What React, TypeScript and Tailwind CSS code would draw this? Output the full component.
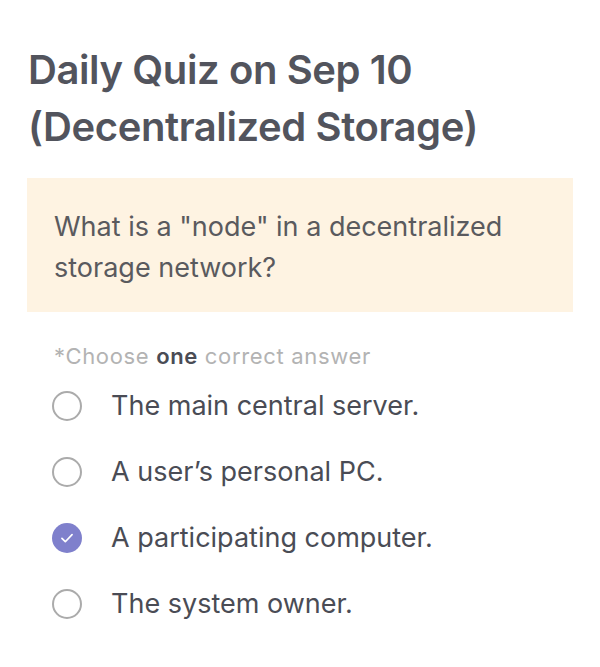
const options = [
  { id: "a", label: "The main central server." },
  { id: "b", label: "A user\u2019s personal PC." },
  { id: "c", label: "A participating computer." },
  { id: "d", label: "The system owner." },
];

function Radio({ checked }: { checked: boolean }) {
  if (checked) {
    return (
      <span className="flex h-[30px] w-[30px] shrink-0 items-center justify-center rounded-full bg-[#7f80cc]">
        <svg width="18" height="18" viewBox="0 0 16 16" fill="none">
          <path d="M3.5 8.3l3 3 6-6.3" stroke="#fff" strokeWidth="1.5" strokeLinecap="round" strokeLinejoin="round" />
        </svg>
      </span>
    );
  }
  return <span className="h-[30px] w-[30px] shrink-0 rounded-full border-2 border-[#ababab]" />;
}

export default function App() {
  const selected = "c";
  return (
    <div className="min-h-[667px] bg-white px-[27px] pt-[41px] font-['Inter',sans-serif]">
      <h1 className="pl-px text-[40px] font-semibold leading-[57px] tracking-[-0.01em] text-[#52545d]">
        Daily Quiz on Sep 10
        <br />
        (Decentralized Storage)
      </h1>

      <div className="mt-[23px] bg-[#fef3e2] px-[27px] pb-[24px] pt-[28px]">
        <p className="text-[27px] leading-[41px] text-[#5a5a5e]">
          What is a "node" in a decentralized storage network?
        </p>
      </div>

      <p className="mt-[31px] pl-[27px] text-[22px] leading-[26px] tracking-[0.03em] text-[#b3b3b3]">
        *Choose <span className="font-semibold text-[#4a4c55]">one</span> correct answer
      </p>

      <div className="mt-[19px] flex flex-col gap-[30px] pl-[25px]">
        {options.map((o) => (
          <label key={o.id} className="flex h-[36px] items-center gap-[29px]">
            <Radio checked={o.id === selected} />
            <span className="text-[27px] leading-[36px] text-[#4a4c55]">{o.label}</span>
          </label>
        ))}
      </div>
    </div>
  );
}
